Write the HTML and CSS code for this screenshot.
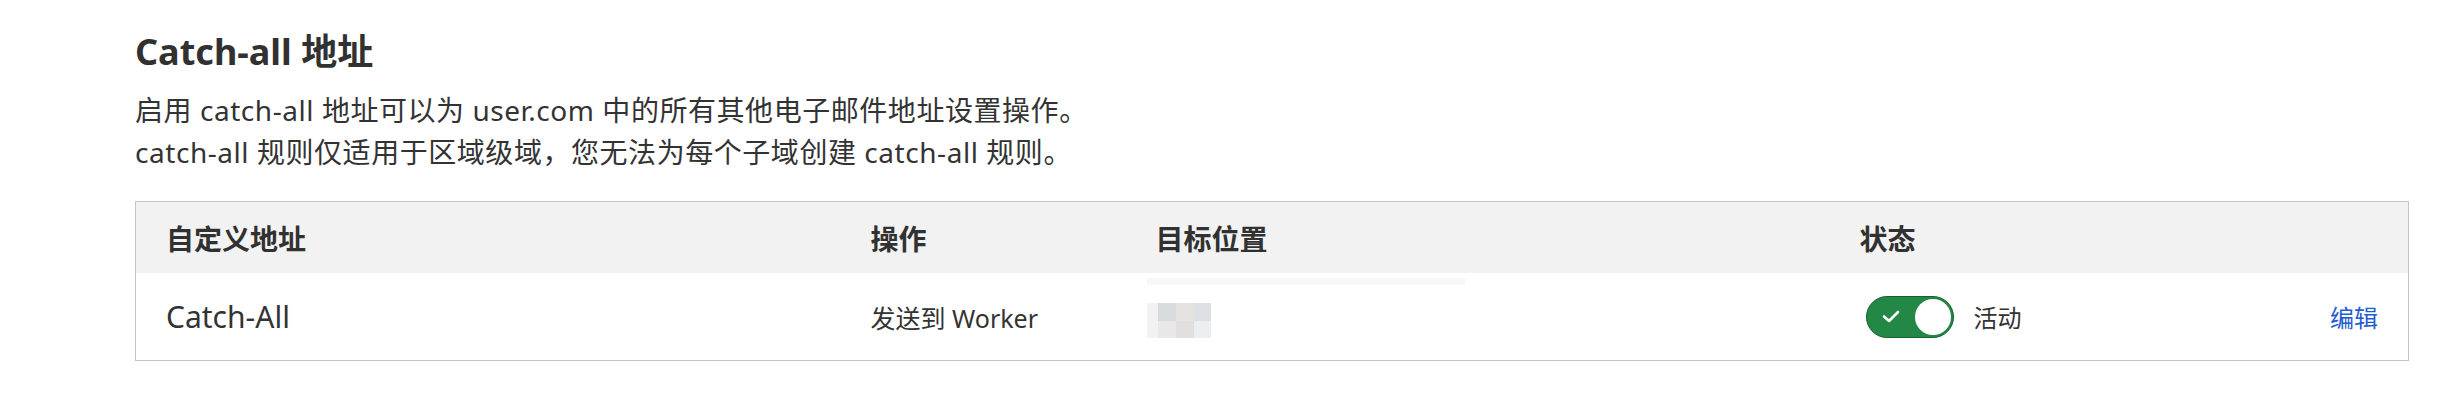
FILE: index.html
```html
<!DOCTYPE html>
<html lang="zh-CN">
<head>
    <meta charset="UTF-8">
    <meta name="viewport" content="width=device-width, initial-scale=1.0">
    <title>Catch-all 地址</title>
    <link rel="stylesheet" href="styles.css">
</head>
<body>
    <div class="section">
        <h2 class="title">Catch-all 地址</h2>
        <p class="desc">
            启用 catch-all 地址可以为 user.com 中的所有其他电子邮件地址设置操作。<br>
            catch-all 规则仅适用于区域级域，您无法为每个子域创建 catch-all 规则。
        </p>

        <table class="rules">
            <colgroup>
                <col class="c-name">
                <col class="c-action">
                <col class="c-target">
                <col class="c-status">
                <col>
            </colgroup>
            <thead>
                <tr>
                    <th>自定义地址</th>
                    <th>操作</th>
                    <th>目标位置</th>
                    <th>状态</th>
                    <th></th>
                </tr>
            </thead>
            <tbody>
                <tr>
                    <td class="name">Catch-All</td>
                    <td class="action">发送到 Worker</td>
                    <td class="target">
                        <div class="redact-bar"></div>
                        <div class="redact-block">
                            <span style="background:#f3f1f2"></span>
                            <span style="background:#d9dcdf"></span>
                            <span style="background:#e6e2df"></span>
                            <span style="background:#dde1e3"></span>
                            <span style="background:#f2f2f2"></span>
                            <span style="background:#e8e8e8"></span>
                            <span style="background:#e2e0de"></span>
                            <span style="background:#eceef0"></span>
                        </div>
                    </td>
                    <td class="status-cell">
                        <div class="status">
                            <span class="toggle">
                                <svg class="check" width="18" height="13" viewBox="0 0 18 13">
                                    <path d="M2 6.5 L7 11 L16 2" fill="none" stroke="#fff" stroke-width="2.6" stroke-linecap="round" stroke-linejoin="round"/>
                                </svg>
                                <span class="knob"></span>
                            </span>
                            <span class="status-text">活动</span>
                        </div>
                    </td>
                    <td class="edit"><a href="#">编辑</a></td>
                </tr>
            </tbody>
        </table>
    </div>
</body>
</html>
```

FILE: styles.css
```css
body {
    margin: 0;
    background: #fff;
    color: #333;
    font-family: "Noto Sans", "Noto Sans CJK SC", sans-serif;
}
.section {
    padding: 28px 40px 0 135px;
}
.title {
    margin: 0;
    font-size: 36px;
    line-height: 48px;
    font-weight: 700;
    color: #313131;
}
.desc {
    margin: 13px 0 28px;
    font-size: 28px;
    line-height: 42px;
    letter-spacing: 0.55px;
}
.rules {
    width: 100%;
    border-collapse: collapse;
    table-layout: fixed;
    border: 1px solid #c4c4c4;
}
.c-name { width: 705px; }
.c-action { width: 285px; }
.c-target { width: 704px; }
.c-status { width: 420px; }
.rules th {
    height: 71px;
    padding: 0 30px;
    background: #f2f2f2;
    text-align: left;
    font-size: 28px;
    font-weight: 700;
    color: #313131;
}
.rules td {
    height: 82px;
    padding: 0 30px;
    vertical-align: middle;
}
.name {
    font-size: 30px;
}
.action {
    font-size: 25px;
}
.rules td.target {
    vertical-align: top;
    padding: 5px 0 0 21px;
}
.redact-bar {
    width: 318px;
    height: 7px;
    background: #f7f7f7;
}
.redact-block {
    display: grid;
    grid-template-columns: 11px 18px 18px 17px;
    grid-template-rows: 18px 17px;
    margin-top: 18px;
}
.rules td.status-cell {
    padding-left: 36px;
}
.status {
    display: flex;
    align-items: center;
    gap: 20px;
}
.toggle {
    display: inline-flex;
    align-items: center;
    justify-content: space-between;
    box-sizing: border-box;
    width: 88px;
    height: 42px;
    padding: 0 2px 0 15px;
    border: 1px solid #17602f;
    border-radius: 21px;
    background: #238845;
}
.knob {
    width: 36px;
    height: 36px;
    border-radius: 50%;
    background: #fff;
}
.status-text {
    font-size: 24px;
}
.rules td.edit {
    text-align: right;
    font-size: 24px;
}
.edit a {
    color: #1f5bd1;
    text-decoration: none;
}
```
